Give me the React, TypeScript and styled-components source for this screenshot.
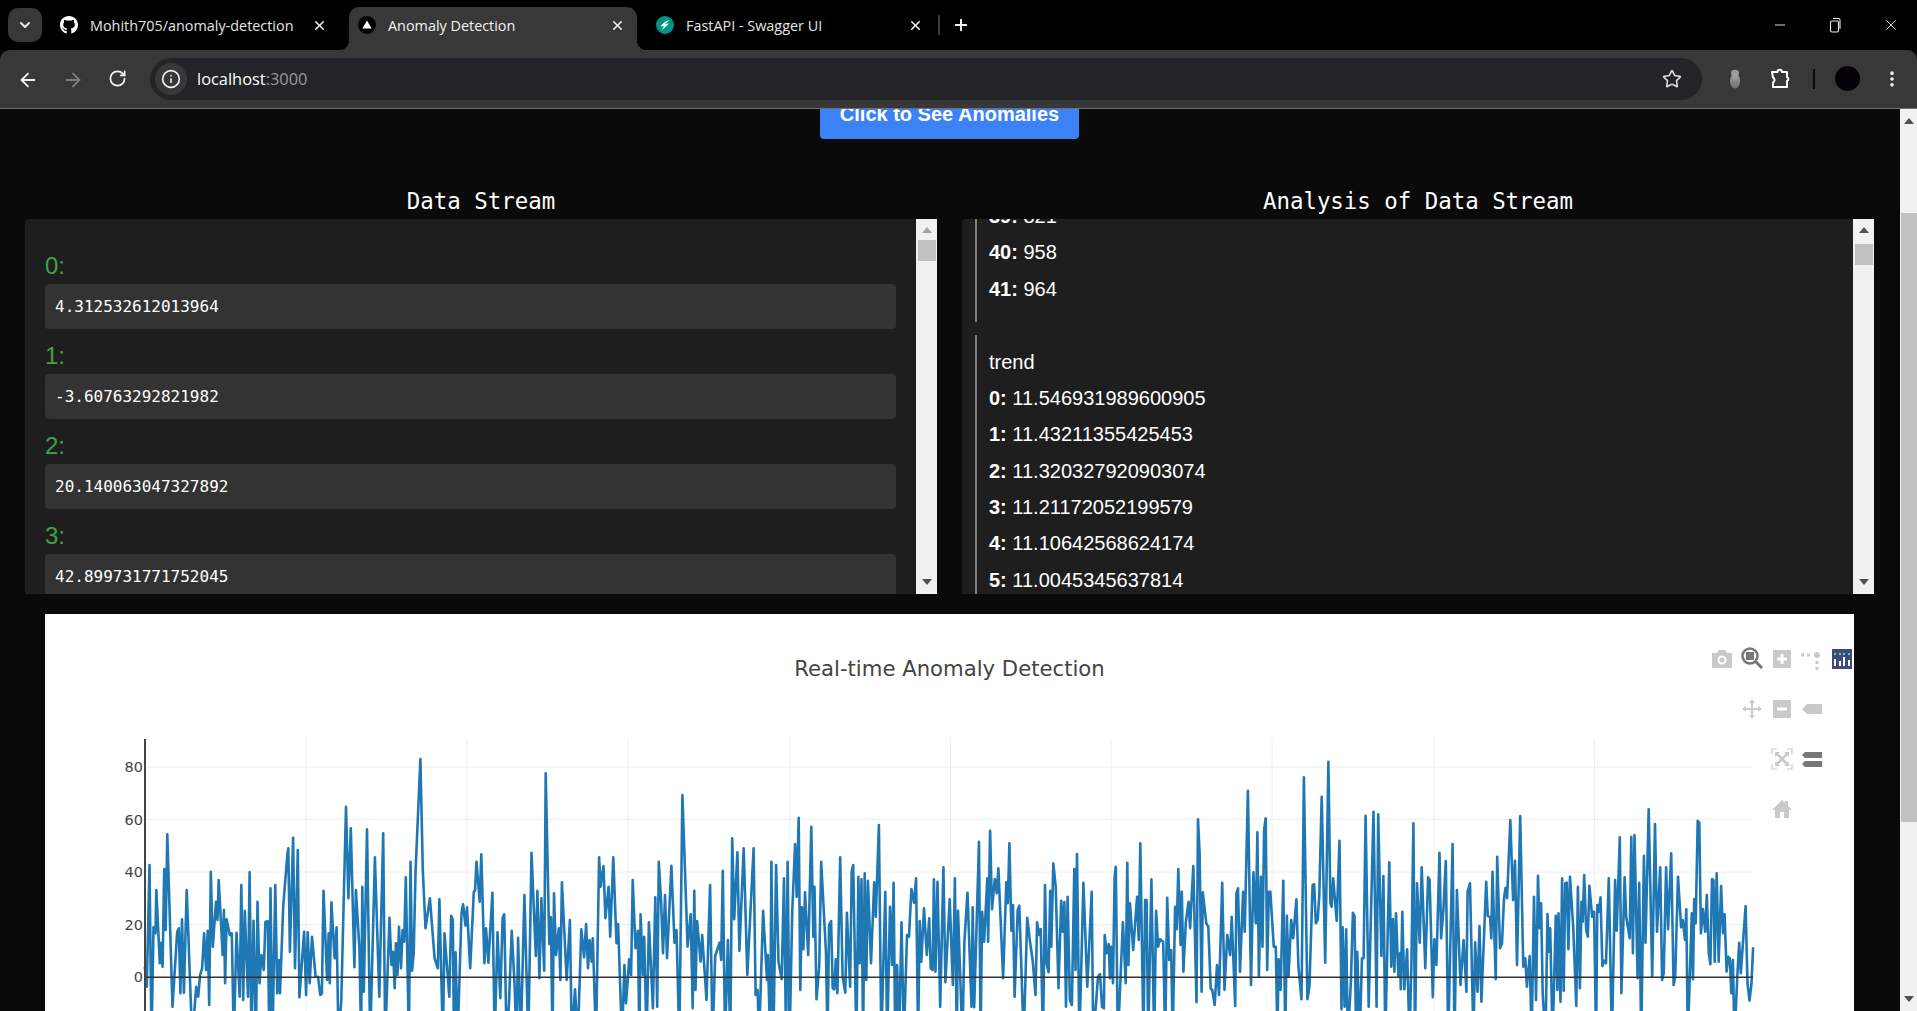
import React from "react";
import styled, { createGlobalStyle } from "styled-components";
import { FaGithub } from "react-icons/fa";
import {
  ArrowLeft,
  ArrowRight,
  ChevronDown,
  Info,
  Minus,
  MoreVertical,
  Plus,
  RotateCw,
  Star,
  X,
} from "lucide-react";

const GlobalStyle = createGlobalStyle`
  html, body {
    margin: 0;
    padding: 0;
    height: 100%;
    overflow: hidden;
    background: #0a0a0a;
  }
  * {
    box-sizing: border-box;
  }
`;

const Shell = styled.div`
  width: 100vw;
  height: 100vh;
  display: flex;
  flex-direction: column;
  overflow: hidden;
  font-family: "Liberation Sans", Arial, sans-serif;
`;

/* browser chrome */
const TabStrip = styled.div`
  height: 50px;
  flex: none;
  background: #000;
  display: flex;
  align-items: flex-end;
  padding-left: 8px;
`;
const TabMenu = styled.div`
  width: 34px;
  height: 34px;
  margin: 0 9px 8px 0;
  border-radius: 10px;
  background: #383838;
  color: #e8e8e8;
  display: flex;
  align-items: center;
  justify-content: center;
`;
const Tab = styled.div<{ $active?: boolean }>`
  position: relative;
  width: 288px;
  height: 43px;
  margin-right: 10px;
  padding: 0 12px 7px 9px;
  display: flex;
  align-items: center;
  border-radius: 10px 10px 0 0;
  background: ${(p) => (p.$active ? "#383838" : "transparent")};
  color: ${(p) => (p.$active ? "#f2f2f2" : "#e4e4e4")};
  font-family: "Open Sans", sans-serif;
  font-size: 14.4px;

  ${(p) =>
    p.$active &&
    `
    &::before, &::after {
      content: "";
      position: absolute;
      bottom: 0;
      width: 10px;
      height: 10px;
    }
    &::before {
      left: -10px;
      background: radial-gradient(circle at 0 0, transparent 10px, #383838 10.5px);
    }
    &::after {
      right: -10px;
      background: radial-gradient(circle at 100% 0, transparent 10px, #383838 10.5px);
    }
  `}
`;
const TabIcon = styled.span`
  width: 18px;
  height: 18px;
  flex: none;
  display: flex;
  align-items: center;
  justify-content: center;
  color: #fff;
`;
const TabTitle = styled.span`
  margin-left: 12px;
  flex: 1;
  white-space: nowrap;
`;
const TabSeparator = styled.div`
  width: 2px;
  height: 20px;
  margin: 0 0 15px -7px;
  background: #3c3c3c;
`;
const NewTab = styled.div`
  margin: 0 0 15px 12px;
  height: 20px;
  display: flex;
  align-items: center;
  color: #f4f4f4;
`;
const WindowControls = styled.div`
  margin-left: auto;
  height: 50px;
  padding-right: 17px;
  display: flex;
  align-items: center;
  gap: 40px;
  color: #ececec;
`;
const Toolbar = styled.div`
  height: 59px;
  flex: none;
  background: #383838;
  border-radius: 10px 10px 0 0;
  border-bottom: 1px solid #6d6d6d;
  display: flex;
  align-items: center;
  padding: 0 15px 1px 17px;
  color: #f0f0f0;
`;
const NavButton = styled.div<{ $dim?: boolean }>`
  width: 20px;
  height: 20px;
  margin-right: 25px;
  color: ${(p) => (p.$dim ? "#7d7d7d" : "#f2f2f2")};
  &:nth-of-type(3) {
    margin-right: 22px;
    margin-left: 1px;
  }
`;
const AddressBar = styled.div`
  flex: 1;
  height: 42px;
  border-radius: 21px;
  background: #222427;
  display: flex;
  align-items: center;
  padding: 0 20px 0 5px;
`;
const InfoChip = styled.div`
  width: 32px;
  height: 32px;
  border-radius: 50%;
  background: #383838;
  display: flex;
  align-items: center;
  justify-content: center;
  color: #f0f0f0;
`;
const Url = styled.div`
  margin-left: 10px;
  flex: 1;
  font-family: "Open Sans", sans-serif;
  font-size: 16.4px;
  color: #fff;
  span {
    color: #9a9a9a;
  }
`;
const ToolSlot = styled.div<{ $gap: number; $width: number }>`
  margin-left: ${(p) => p.$gap}px;
  width: ${(p) => p.$width}px;
  flex: none;
  display: flex;
  align-items: center;
  justify-content: center;
`;
const ToolDivider = styled.div`
  width: 2px;
  height: 20px;
  background: #0a0a0a;
`;
const Avatar = styled.div`
  width: 25px;
  height: 25px;
  border-radius: 50%;
  background: #050108;
`;

/* page */
const Viewport = styled.div`
  flex: 1;
  min-height: 0;
  display: flex;
  overflow: hidden;
`;
const Page = styled.div`
  flex: 1;
  min-width: 0;
  padding: 0 25px;
  background: #0a0a0a;
  overflow: hidden;
`;
const ActionRow = styled.div`
  margin: -20px 1px 0 0;
  display: flex;
  justify-content: center;
`;
const ActionButton = styled.button`
  width: 259px;
  height: 50px;
  border: 0;
  border-radius: 4px;
  background: #3b82f6;
  color: #fff;
  font-family: "Liberation Sans", Arial, sans-serif;
  font-size: 20px;
  font-weight: 700;
`;
const Columns = styled.div`
  margin-top: 48px;
  display: grid;
  grid-template-columns: 912px 912px;
  gap: 25px;
`;
const ColumnTitle = styled.h2`
  margin: 0 0 2px;
  height: 30px;
  line-height: 29px;
  text-align: center;
  font-family: "DejaVu Sans Mono", monospace;
  font-size: 22.4px;
  font-weight: 400;
  color: #fff;
`;
const Panel = styled.div`
  height: 375px;
  display: flex;
  background: #1e1e1e;
  border-radius: 4px 0 0 0;
  overflow: hidden;
`;
const PanelBody = styled.div<{ $analysis?: boolean }>`
  flex: 1;
  min-width: 0;
  overflow: hidden;
  padding: ${(p) => (p.$analysis ? "0 0 0 13px" : "20px")};
`;
const StreamLabel = styled.div`
  height: 23px;
  line-height: 21px;
  margin: 16px 0 6px;
  font-size: 24px;
  color: #43a047;
`;
const StreamValue = styled.div`
  height: 45px;
  line-height: 45px;
  padding: 0 10px;
  border-radius: 4px;
  background: #333;
  color: #fff;
  font-family: "DejaVu Sans Mono", monospace;
  font-size: 16px;
`;
const ResultBlock = styled.div<{ $offset: number; $pad: string }>`
  margin-top: ${(p) => p.$offset}px;
  padding: ${(p) => p.$pad};
  border-left: 2px solid #808080;
`;
const ResultLine = styled.div`
  height: 36.3px;
  line-height: 36.3px;
  font-size: 20px;
  color: #fff;
  white-space: nowrap;
  b {
    font-weight: 700;
  }
`;

/* scrollbars are drawn so both panels show the scrolled state of the page */
const ScrollTrack = styled.div<{ $width: number }>`
  position: relative;
  width: ${(p) => p.$width}px;
  flex: none;
  height: 100%;
  background: #f1f1f1;
`;
const ScrollThumb = styled.div<{ $top: number; $height: number; $inset: number }>`
  position: absolute;
  top: ${(p) => p.$top}px;
  left: ${(p) => p.$inset}px;
  right: ${(p) => Math.max(p.$inset - 1, 0)}px;
  height: ${(p) => p.$height}px;
  background: #c1c1c1;
`;
const ScrollArrow = styled.div<{ $down?: boolean; $dim?: boolean; $at: number }>`
  position: absolute;
  left: 50%;
  margin-left: -5px;
  ${(p) => (p.$down ? "bottom" : "top")}: ${(p) => p.$at}px;
  border-left: 5px solid transparent;
  border-right: 5px solid transparent;
  ${(p) => (p.$down ? "border-top" : "border-bottom")}: 6px solid ${(p) =>
    p.$dim ? "#a3a3a3" : "#505050"};
`;

/* plot */
const ChartCard = styled.div`
  position: relative;
  margin: 20px 0 0 20px;
  width: 1809px;
  height: 600px;
  padding-top: 43px;
  background: #fff;
`;
const ChartTitle = styled.div`
  height: 24px;
  line-height: 24px;
  text-align: center;
  font-family: "DejaVu Sans", Verdana, sans-serif;
  font-size: 21.2px;
  color: #444;
`;
const PlotSvg = styled.svg`
  display: block;
  margin-top: 44px;
`;
const ModeBar = styled.div`
  position: absolute;
  top: 20px;
  right: 0;
  width: 150px;
  margin-right: -3px;
  display: grid;
  grid-template-columns: repeat(5, 30px);
  grid-auto-rows: 50px;
`;
const ModeCell = styled.div`
  display: flex;
  align-items: center;
  justify-content: center;
`;

const TICKS = [80, 60, 40, 20];
const Y_FOR = (v: number) => 977 - v * 2.625;
const V_GRID = [306, 467, 628, 790, 950.5, 1111, 1272, 1434, 1594.5];

// peaks and troughs read off the reference; the line's x,y pairs in three runs
const RUN_A =
  "265,740 270,800 277,435 282,870 287,622 292,640 294,510 303,730 305,668 310,740 314,447 318,630 322,343 335,860 347,635 351,625 355,820 359,598 364,818 371,510 385,870 395,800 400,830 405,765 410,745 415,640 420,750 424,632 428,855 432,455 437,680 445,545 449,600 452,480 462,705 465,570 468,790 472,598 480,645 485,640 490,870 497,638 505,830 509,495 514,840 518,572 526,830 530,457 535,870 540,602 546,870 550,545 555,790 560,705 566,750 570,605 576,604 580,870 583,505 588,870 595,495 600,820 604,720 607,820 615,560 626,400 628,385 632,695 640,353 645,745 652,390 656,832 668,635 673,825 677,637 682,790 688,650 697,770 703,770 709,825 713,820 717,512 726,780 730,640 733,790 737,547 745,715 750,622 755,870 762,840 774,260 780,535 786,325 795,742 799,510 808,690 812,870 815,500 819,815 827,328 835,870 847,412 858,830 868,340 873,870 884,593 889,735 893,695 897,805 900,670 904,765 908,620 913,745 917,630 921,665 925,472 933,870 937,425 941,752 945,700 950,450 962,117 968,450 975,625 986,535 998,715 1006,745 1010,538 1019,870 1023,640 1035,830 1040,587 1044,600 1047,870 1051,697 1056,870 1066,580 1070,553 1076,617 1080,562 1088,745 1097,515 1100,512 1104,425 1112,545 1116,403 1124,730 1128,625 1134,728 1144,518 1150,870 1157,637 1164,835 1170,595 1174,583 1180,870 1186,850 1193,632 1200,790 1205,870 1209,653 1216,870 1225,525 1235,870 1243,398 1254,708 1258,512 1263,775 1268,535 1275,752 1279,160 1288,672 1292,592 1296,870 1300,520 1305,705 1312,625 1316,780 1320,487 1332,780 1340,600 1345,870 1353,808 1360,870 1369,628 1376,712 1381,612 1386,745 1390,660 1395,725 1398,655 1406,870 1414,412 1418,500 1425,438 1430,595 1438,500 1442,650 1450,412 1458,670 1462,612 1472,870 1478,735 1482,850 1490,718 1495,765 1499,480 1506,685 1512,632 1516,870 1519,583 1525,765 1528,650 1534,870 1540,607 1550,865 1556,532 1561,860 1565,425";
const RUN_B =
  "28,545 33,700 38,525 43,715 54,437 62,668 67,630 74,870 82,225 95,680 103,583 108,865 112,512 115,810 119,603 128,725 132,645 143,840 152,495 158,870 165,708 176,668 180,720 184,452 190,870 197,660 203,870 208,355 213,598 221,397 226,692 237,385 246,765 262,385 267,825 272,810 276,870 286,572 296,780 298,705 304,870 307,425 312,870 319,435 325,725 333,778 339,475 344,870 348,425 353,870 360,570 367,372 371,530 376,293 380,810 384,562 388,688 392,517 400,705 408,320 413,650 416,500 421,838 428,740 433,425 445,700 449,870 453,615 458,603 462,805 466,808 470,718 474,820 481,412 487,770 494,818 498,578 506,800 510,455 514,435 522,870 527,470 530,730 535,478 539,870 543,460 547,780 551,482 559,730 567,487 571,590 579,315 585,870 595,515 600,870 607,560 612,735 616,488 620,870 625,735 630,870 636,607 642,870 650,645 655,650 661,507 668,548 673,475 678,870 682,603 686,725 693,565 700,705 706,595 710,745 715,750 718,478 722,755 727,485 734,860 742,442 747,787 758,538 766,795 771,475 776,870 779,572 790,870 795,665 803,518 813,860 816,562 820,862 832,365 836,870 840,575 845,665 853,475 855,665 860,332 865,568 872,477 877,520 881,445 893,775 901,487 905,550 909,370 914,632 918,555 922,830 930,570 934,557 940,775 945,870 954,593 960,655 968,725 975,825 979,607 984,645 988,627 994,870 999,495 1003,730 1008,757 1012,512 1015,680 1020,430 1026,500 1033,805 1040,542 1044,635 1048,546 1052,860 1056,530 1062,840 1067,855 1073,447 1076,750 1080,402 1086,870 1096,488 1106,800 1117,515 1121,870 1128,850 1133,770 1138,762 1143,860 1148,865 1150,645 1155,700 1160,672 1163,775 1166,680 1171,790 1175,472 1178,440 1183,870 1188,825 1196,607 1203,790 1207,428 1210,735 1214,550 1222,690 1232,530 1236,660 1240,370 1248,870 1252,540 1256,540 1260,870 1268,478 1275,870 1280,572 1285,680 1290,658 1298,665 1303,870 1308,533 1313,720 1318,690 1322,870 1328,560 1332,628 1336,447 1342,675 1345,515 1349,755 1355,608 1362,545 1366,625 1374,438 1382,847 1386,298 1390,400 1395,815 1398,517 1407,610 1412,620 1418,805 1422,810 1428,855 1434,735 1439,825 1447,488 1453,810 1460,645 1467,705 1471,590 1480,858 1483,520 1487,505 1492,755 1500,515 1504,635 1512,212 1520,795 1526,457 1532,610 1536,337 1540,768 1545,470 1549,680 1553,330 1557,295 1561,750 1565,515";
const RUN_C =
  "26,515 35,680 40,680 44,870 47,718 52,810 59,482 64,870 68,587 72,770 79,600 84,655 92,538 97,740 105,838 111,172 120,838 125,800 133,495 137,493 141,610 146,600 150,525 156,230 165,728 173,125 178,550 181,560 185,475 194,603 201,362 206,868 209,622 214,860 218,628 222,870 230,785 235,578 239,588 243,870 246,695 252,870 258,715 262,715 267,287 275,860 287,275 295,860 299,283 307,708 312,468 317,870 327,427 332,740 336,597 340,755 344,580 350,770 354,700 356,808 360,575 365,808 372,688 378,870 383,735 388,310 392,870 397,490 404,668 409,442 418,745 425,472 429,480 437,832 441,658 446,735 454,398 458,655 464,565 470,423 476,870 487,372 492,870 498,510 507,795 515,660 522,815 525,515 531,490 540,870 544,667 550,815 555,618 560,845 572,485 576,588 582,590 585,655 588,455 596,778 600,410 607,685 612,670 617,535 621,503 625,535 633,300 640,540 645,422 650,735 658,288 666,740 671,715 675,800 682,708 687,870 693,530 698,840 703,467 707,625 711,550 715,820 722,870 727,582 730,695 734,625 740,870 748,587 752,810 755,580 760,845 764,475 768,812 772,490 776,488 780,688 784,470 792,620 800,858 804,500 809,805 813,545 816,605 820,465 825,630 829,650 833,497 840,590 845,575 850,870 853,555 857,575 861,532 866,738 870,722 875,730 882,475 890,870 898,480 902,632 910,352 914,820 922,472 926,590 935,655 939,350 943,700 947,345 955,775 959,488 964,870 971,407 975,668 983,268 992,770 999,312 1004,635 1012,442 1017,780 1021,760 1027,442 1032,628 1040,400 1046,795 1050,770 1057,470 1065,622 1069,600 1075,660 1078,568 1082,870 1092,580 1095,778 1098,537 1102,610 1107,302 1111,308 1115,640 1120,567 1126,635 1130,525 1135,700 1139,733 1143,477 1147,480 1150,725 1155,460 1160,725 1166,498 1171,640 1175,583 1180,755 1184,710 1188,715 1192,820 1196,720 1200,870 1207,770 1212,668 1216,760 1228,558 1233,790 1238,842 1243,790 1247,682";

function toPoints(run: string, originX: number) {
  return run
    .split(" ")
    .map((pair) => {
      const [zx, zy] = pair.split(",").map(Number);
      const y = zy >= 870 ? 1040 : 720 + zy / 3;
      return `${(originX + zx / 2.529).toFixed(1)},${y.toFixed(1)}`;
    })
    .join(" ");
}
const LINE = [toPoints(RUN_A, 40), toPoints(RUN_B, 650), toPoints(RUN_C, 1260)].join(" ");

const STREAM = [
  ["0:", "4.312532612013964"],
  ["1:", "-3.60763292821982"],
  ["2:", "20.140063047327892"],
  ["3:", "42.899731771752045"],
];
const TOP_RESULTS = [
  ["39:", "821"],
  ["40:", "958"],
  ["41:", "964"],
];
const TREND = [
  ["0:", "11.546931989600905"],
  ["1:", "11.43211355425453"],
  ["2:", "11.320327920903074"],
  ["3:", "11.21172052199579"],
  ["4:", "11.10642568624174"],
  ["5:", "11.0045345637814"],
];

const LIGHT = "#c9c9c9";
const DARK = "#777";

function ModeIcon({ children }: { children: React.ReactNode }) {
  return (
    <svg width="24" height="24" viewBox="0 0 24 24">
      {children}
    </svg>
  );
}

function ModeBarIcons() {
  return (
    <ModeBar>
      <ModeCell>
        <ModeIcon>
          <path d="M2 6h5l2-3h6l2 3h5v15H2z" fill={LIGHT} />
          <circle cx="12" cy="13" r="4.5" fill="#fff" />
          <circle cx="12" cy="13" r="2.5" fill={LIGHT} />
        </ModeIcon>
      </ModeCell>
      <ModeCell>
        <ModeIcon>
          <circle cx="10" cy="9" r="7.5" fill="none" stroke={DARK} strokeWidth="2.5" />
          <rect x="6" y="5" width="8" height="8" fill={DARK} />
          <path d="M15 14l7 7" stroke={DARK} strokeWidth="3" />
        </ModeIcon>
      </ModeCell>
      <ModeCell>
        <ModeIcon>
          <rect x="3" y="3" width="18" height="18" fill={LIGHT} />
          <path d="M12 7v10M7 12h10" stroke="#fff" strokeWidth="3" />
        </ModeIcon>
      </ModeCell>
      <ModeCell>
        <ModeIcon>
          <circle cx="17" cy="8" r="3" fill={LIGHT} />
          <path d="M1 8h3M7 8h3M17 14v3M17 20v3" stroke={LIGHT} strokeWidth="3" />
        </ModeIcon>
      </ModeCell>
      <ModeCell>
        <ModeIcon>
          <rect x="2" y="2" width="20" height="20" fill="#3d4c79" />
          <path d="M5 12v7M10 14v5M14 10v9M19 13v6" stroke="#fff" strokeWidth="2" />
          <path d="M5 6v2M10 6v2M14 6v2M19 6v2" stroke="#69c0c0" strokeWidth="2" />
        </ModeIcon>
      </ModeCell>

      <ModeCell />
      <ModeCell>
        <ModeIcon>
          <path d="M12 2l3 4h-2v5h5V9l4 3-4 3v-2h-5v5h2l-3 4-3-4h2v-5H6v2l-4-3 4-3v2h5V6H9z" fill={LIGHT} />
        </ModeIcon>
      </ModeCell>
      <ModeCell>
        <ModeIcon>
          <rect x="3" y="3" width="18" height="18" fill={LIGHT} />
          <path d="M7 12h10" stroke="#fff" strokeWidth="3" />
        </ModeIcon>
      </ModeCell>
      <ModeCell>
        <ModeIcon>
          <path d="M2 12l5-5h15v10H7z" fill={LIGHT} />
        </ModeIcon>
      </ModeCell>
      <ModeCell />

      <ModeCell />
      <ModeCell />
      <ModeCell>
        <ModeIcon>
          <path d="M7 2H2v5M17 2h5v5M7 22H2v-5M17 22h5v-5" fill="none" stroke={LIGHT} strokeWidth="1.2" />
          <path d="M7 7l10 10M17 7L7 17" stroke={LIGHT} strokeWidth="2.6" />
          <path d="M5 5h5l-5 5zM19 5h-5l5 5zM5 19h5l-5-5zM19 19h-5l5-5z" fill={LIGHT} />
        </ModeIcon>
      </ModeCell>
      <ModeCell>
        <ModeIcon>
          <path d="M2 8l3-3h17v6H5zM2 17l3-3h17v6H5z" fill={DARK} />
        </ModeIcon>
      </ModeCell>
      <ModeCell />

      <ModeCell />
      <ModeCell />
      <ModeCell>
        <ModeIcon>
          <path d="M12 3L2 13h3v8h5v-6h4v6h5v-8h3l-4-4V4h-3v2z" fill={LIGHT} />
        </ModeIcon>
      </ModeCell>
      <ModeCell />
      <ModeCell />
    </ModeBar>
  );
}

function App() {
  return (
    <Shell>
      <GlobalStyle />
      <TabStrip>
        <TabMenu>
          <ChevronDown size={16} strokeWidth={3} />
        </TabMenu>
        <Tab>
          <TabIcon>
            <FaGithub size={20} />
          </TabIcon>
          <TabTitle>Mohith705/anomaly-detection</TabTitle>
          <X size={15} strokeWidth={2.5} color="#f0f0f0" />
        </Tab>
        <Tab $active>
          <TabIcon>
            <svg width="20" height="20" viewBox="0 0 20 20">
              <circle cx="10" cy="10" r="10" fill="#000" />
              <path d="M10 5l5.2 9H4.8z" fill="#fff" />
            </svg>
          </TabIcon>
          <TabTitle>Anomaly Detection</TabTitle>
          <X size={15} strokeWidth={2.5} color="#f0f0f0" />
        </Tab>
        <Tab>
          <TabIcon>
            <svg width="20" height="20" viewBox="0 0 20 20">
              <circle cx="10" cy="10" r="10" fill="#009485" />
              <path d="M15 4.5C11 5.5 7.5 8 5 11.8l4-.4-3 5 8.5-8-4.3.4z" fill="#fff" />
            </svg>
          </TabIcon>
          <TabTitle>FastAPI - Swagger UI</TabTitle>
          <X size={15} strokeWidth={2.5} color="#f0f0f0" />
        </Tab>
        <TabSeparator />
        <NewTab>
          <Plus size={18} strokeWidth={2.6} />
        </NewTab>
        <WindowControls>
          <Minus size={16} strokeWidth={1.4} />
          <svg width="14" height="16" viewBox="0 0 14 16" fill="none" stroke="currentColor" strokeWidth="1.1">
            <rect x="2.5" y="4" width="8" height="11" rx="1.5" />
            <path d="M5 1.5h5.5A1.5 1.5 0 0 1 12 3v9" />
          </svg>
          <X size={18} strokeWidth={1.2} />
        </WindowControls>
      </TabStrip>

      <Toolbar>
        <NavButton>
          <ArrowLeft size={22} strokeWidth={2} />
        </NavButton>
        <NavButton $dim>
          <ArrowRight size={22} strokeWidth={2} />
        </NavButton>
        <NavButton>
          <RotateCw size={19} strokeWidth={2.2} />
        </NavButton>
        <AddressBar>
          <InfoChip>
            <Info size={20} strokeWidth={2} />
          </InfoChip>
          <Url>
            localhost<span>:3000</span>
          </Url>
          <Star size={20} strokeWidth={2} color="#d8d8d8" />
        </AddressBar>
        <ToolSlot $gap={21} $width={24}>
          <svg width="24" height="24" viewBox="0 0 24 24">
            <defs>
              <linearGradient id="bug" x1="0" y1="0" x2="0" y2="1">
                <stop offset="0" stopColor="#a8a8a8" />
                <stop offset="1" stopColor="#6f6f6f" />
              </linearGradient>
            </defs>
            <ellipse cx="12" cy="6" rx="4" ry="3.2" fill="#9a9a9a" />
            <ellipse cx="12" cy="14" rx="5" ry="7.5" fill="url(#bug)" />
          </svg>
        </ToolSlot>
        <ToolSlot $gap={21} $width={24}>
          <svg width="24" height="24" viewBox="0 0 24 24" fill="none" stroke="#fff" strokeWidth="2" strokeLinejoin="round">
            <path d="M4 5h5.5a2.2 2.2 0 0 1 4.4 0H19v5.2a2 2 0 0 1 0 3.8V20H5v-4.5c2-.8 2-4.2 0-5z" />
          </svg>
        </ToolSlot>
        <ToolSlot $gap={21} $width={2}>
          <ToolDivider />
        </ToolSlot>
        <ToolSlot $gap={20} $width={25}>
          <Avatar />
        </ToolSlot>
        <ToolSlot $gap={22} $width={20}>
          <MoreVertical size={22} strokeWidth={2.4} />
        </ToolSlot>
      </Toolbar>

      <Viewport>
        <Page>
          <ActionRow>
            <ActionButton>Click to See Anomalies</ActionButton>
          </ActionRow>
          <Columns>
            <div>
              <ColumnTitle>Data Stream</ColumnTitle>
              <Panel>
                <PanelBody>
                  {STREAM.map(([label, value]) => (
                    <div key={label}>
                      <StreamLabel>{label}</StreamLabel>
                      <StreamValue>{value}</StreamValue>
                    </div>
                  ))}
                </PanelBody>
                <ScrollTrack $width={21}>
                  <ScrollArrow $dim $at={8} />
                  <ScrollThumb $top={21} $height={21} $inset={2} />
                  <ScrollArrow $down $at={9} />
                </ScrollTrack>
              </Panel>
            </div>
            <div>
              <ColumnTitle>Analysis of Data Stream</ColumnTitle>
              <Panel>
                <PanelBody $analysis>
                  <ResultBlock $offset={-21} $pad="0 0 15px 12px">
                    {TOP_RESULTS.map(([k, v]) => (
                      <ResultLine key={k}>
                        <b>{k}</b> {v}
                      </ResultLine>
                    ))}
                  </ResultBlock>
                  <ResultBlock $offset={13} $pad="9px 0 0 12px">
                    <ResultLine>trend</ResultLine>
                    {TREND.map(([k, v]) => (
                      <ResultLine key={k}>
                        <b>{k}</b> {v}
                      </ResultLine>
                    ))}
                  </ResultBlock>
                </PanelBody>
                <ScrollTrack $width={21}>
                  <ScrollArrow $at={8} />
                  <ScrollThumb $top={25} $height={21} $inset={2} />
                  <ScrollArrow $down $at={9} />
                </ScrollTrack>
              </Panel>
            </div>
          </Columns>
          <ChartCard>
            <ChartTitle>Real-time Anomaly Detection</ChartTitle>
            <ModeBarIcons />
            <PlotSvg width="1809" height="286" viewBox="45 725 1809 286">
              {V_GRID.map((x) => (
                <line key={x} x1={x} x2={x} y1="739" y2="1011" stroke="#eee" />
              ))}
              {TICKS.map((t) => (
                <line key={t} x1="145" x2="1753" y1={Y_FOR(t)} y2={Y_FOR(t)} stroke="#eee" />
              ))}
              <polyline points={LINE} fill="none" stroke="#1f77b4" strokeWidth="2.6" strokeLinejoin="round" />
              <line x1="145" x2="1753" y1="977.3" y2="977.3" stroke="#333" strokeWidth="1.5" />
              <line x1="145" x2="145" y1="739" y2="1011" stroke="#444" strokeWidth="2" />
              {[...TICKS, 0].map((t) => (
                <text
                  key={t}
                  x="143"
                  y={Y_FOR(t) + 5}
                  textAnchor="end"
                  fontFamily="'DejaVu Sans', Verdana, sans-serif"
                  fontSize="14.5"
                  fill="#444"
                >
                  {t}
                </text>
              ))}
            </PlotSvg>
          </ChartCard>
        </Page>
        <ScrollTrack $width={17}>
          <ScrollArrow $at={9} />
          <ScrollThumb $top={104} $height={609} $inset={1} />
          <ScrollArrow $down $at={9} />
        </ScrollTrack>
      </Viewport>
    </Shell>
  );
}

export default App;
